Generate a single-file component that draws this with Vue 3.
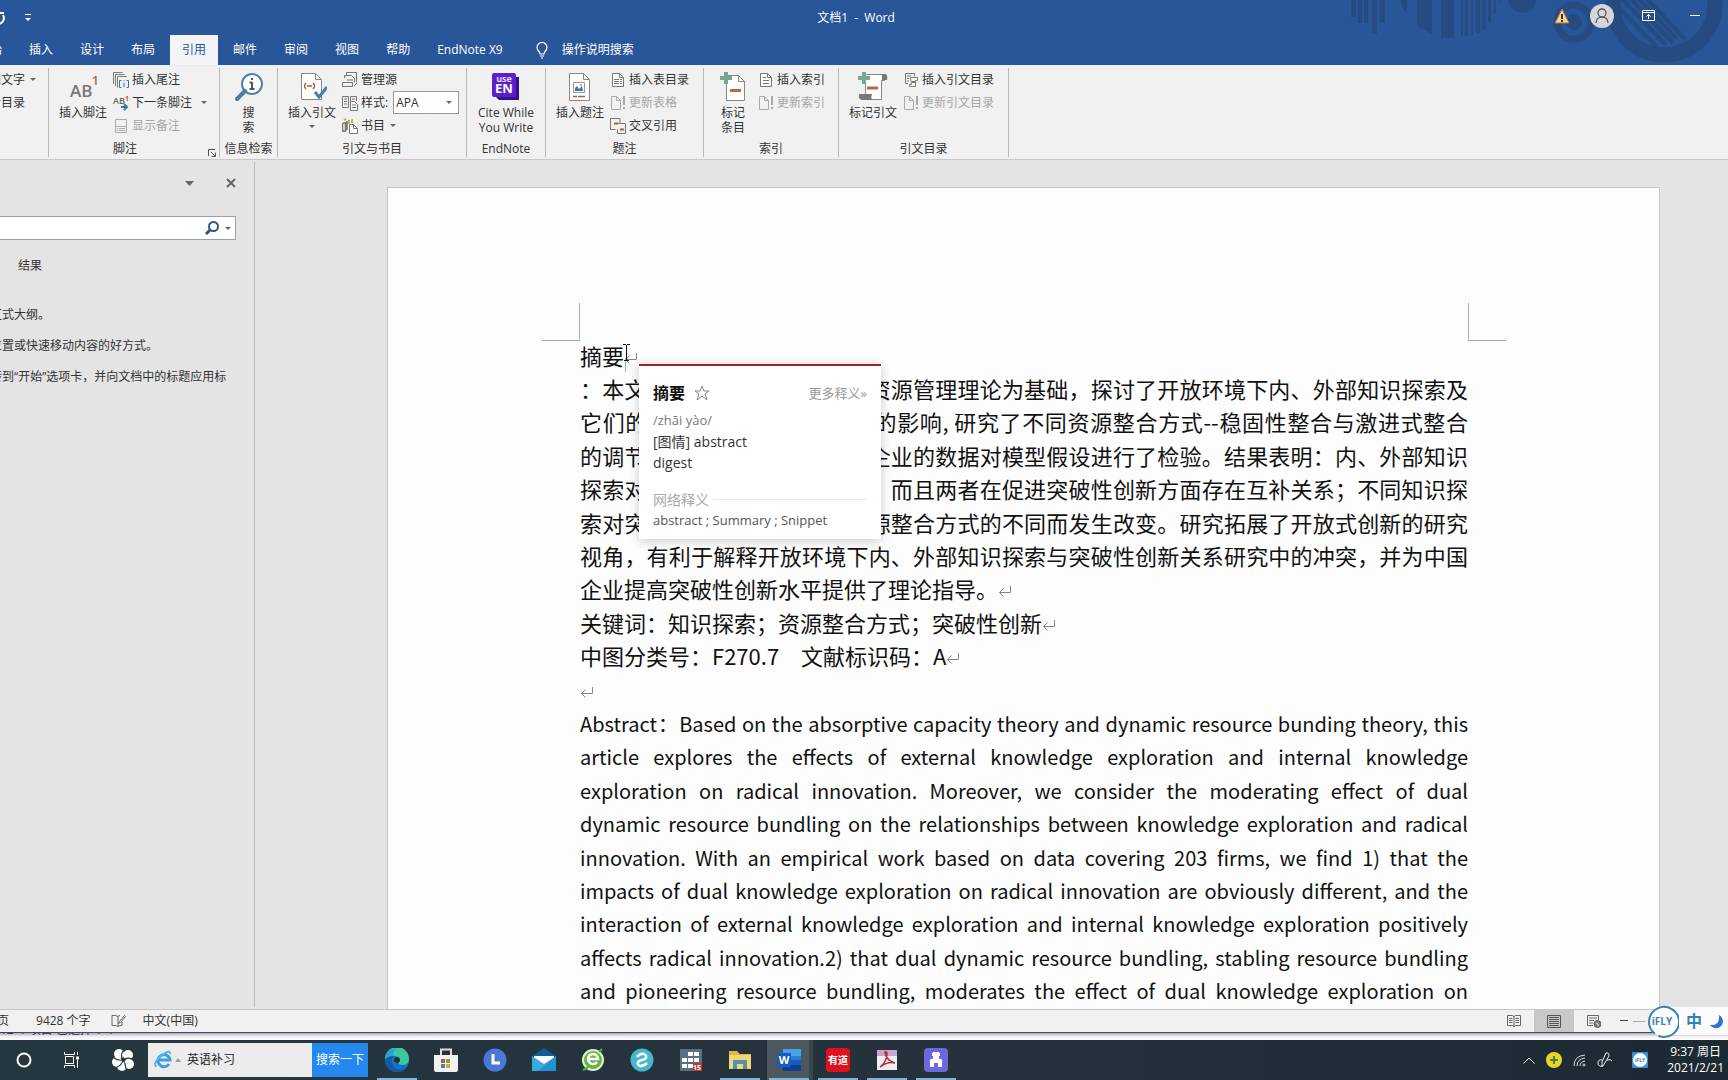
<script setup>
const tabs = ['开始', '插入', '设计', '布局', '引用', '邮件', '审阅', '视图', '帮助', 'EndNote X9']

const lines = [
  { text: '摘要', end: true },
  { text: '：本文以吸收能力理论和动态资源管理理论为基础，探讨了开放环境下内、外部知识探索及' },
  { text: '它们的交互效应对突破性创新的影响, 研究了不同资源整合方式--稳固性整合与激进式整合' },
  { text: '的调节作用，并利用我国高新企业的数据对模型假设进行了检验。结果表明：内、外部知识' },
  { text: '探索对突破性创新有促进作用，而且两者在促进突破性创新方面存在互补关系；不同知识探' },
  { text: '索对突破性创新的影响随着资源整合方式的不同而发生改变。研究拓展了开放式创新的研究' },
  { text: '视角，有利于解释开放环境下内、外部知识探索与突破性创新关系研究中的冲突，并为中国' },
  { text: '企业提高突破性创新水平提供了理论指导。', end: true },
  { text: '关键词：知识探索；资源整合方式；突破性创新', end: true },
  { text: '中图分类号：F270.7　文献标识码：A', end: true },
  { text: '', end: true },
  { latin: true, text: 'Abstract：Based on the absorptive capacity theory and dynamic resource bunding theory, this' },
  { latin: true, text: 'article explores the effects of external knowledge exploration and internal knowledge' },
  { latin: true, text: 'exploration on radical innovation. Moreover, we consider the moderating effect of dual' },
  { latin: true, text: 'dynamic resource bundling on the relationships between knowledge exploration and radical' },
  { latin: true, text: 'innovation. With an empirical work based on data covering 203 firms, we find 1) that the' },
  { latin: true, text: 'impacts of dual knowledge exploration on radical innovation are obviously different, and the' },
  { latin: true, text: 'interaction of external knowledge exploration and internal knowledge exploration positively' },
  { latin: true, text: 'affects radical innovation.2) that dual dynamic resource bundling, stabling resource bundling' },
  { latin: true, text: 'and pioneering resource bundling, moderates the effect of dual knowledge exploration on' }
]
</script>

<template>
  <div class="screen">
    <header class="head">
      <svg class="deco" width="528" height="65" viewBox="0 0 528 65" aria-hidden="true">
        <g fill="#254b80">
          <path d="M151 0h5v17h-5zM158 0h4v23h-4zM164 0h4v23h-4zM172 0h5v34h-5zM180 0h5v23h-5zM201 0h6v14l-4-5z" />
          <path d="M217 0h15v34l-15-8zM241 0h13v38h-13zM261 0h2v36h-2zM265 0h3v36h-3zM271 0h2v35h-2zM276 0h4v33h-4zM282 0h4v29h-4zM288 0h3v22h-3zM294 0h2v14h-2zM300 0h1v5h-1z" />
          <path d="M309 0h27a13.500 13 0 0 1-27 0z" />
          <circle cx="374" cy="22" r="8" />
        </g>
        <circle cx="374" cy="22" r="17" fill="none" stroke="#254b80" stroke-width="7" />
        <circle cx="464" cy="4" r="51" fill="none" stroke="#254b80" stroke-width="15" />
        <path d="M415 4l42 43M422 -1l44 46M431 -1l42 44M439 -1l38 40M447 -1l38 40" stroke="#254b80" stroke-width="4" />
      </svg>
      <div class="titlebar">
        <div class="quick">
          <button class="ic" aria-label="重做"><svg width="16" height="16" viewBox="0 0 16 16" fill="none" stroke="#fff" stroke-width="2"><path d="M8 3h6v0M9 3v5M13 5a6 6 0 0 1-6 9" /></svg></button>
          <button class="ic" aria-label="自定义快速访问工具栏"><svg width="8" height="8" viewBox="0 0 8 8"><path d="M1 0h6v1H1zM1 4h6L4 7z" fill="#fff" /></svg></button>
        </div>
        <h1>文档1&nbsp; -&nbsp; Word</h1>
        <div class="winctl">
          <svg class="warn" width="16" height="16" viewBox="0 0 16 16"><path d="M8 1l7 14H1z" fill="#fbd48d" stroke="#b3762f" /><path d="M8 6v5M8 12v2" stroke="#333" stroke-width="2" /></svg>
          <button class="ic" aria-label="帐户"><svg width="24" height="24" viewBox="0 0 24 24"><circle cx="12" cy="12" r="12" fill="#d5d5da" /><g fill="none" stroke="#555" stroke-width="1.300"><circle cx="12" cy="9" r="4" /><path d="M6 19c0-8 12-8 12 0" /></g></svg></button>
          <button class="ic rb" aria-label="功能区显示选项"><svg width="13" height="11" viewBox="0 0 13 11" fill="none" stroke="#fff"><path d="M.5.5h12v10H.5zM.5 2.500h12M6.500 9V4.500M4.500 6.500l2-2 2 2" /></svg></button>
          <button class="ic mn" aria-label="最小化"><svg width="10" height="1" viewBox="0 0 10 1"><path d="M0 0h10v1H0z" fill="#fff" /></svg></button>
        </div>
      </div>
      <nav class="tabs">
        <button v-for="t in tabs" :key="t" :class="{ on: t === '引用' }">{{ t }}</button>
        <button class="tell"><svg width="12" height="17" viewBox="0 0 12 17" fill="none" stroke="#fff" stroke-width="1.200"><path d="M4 12c0-3-3-3-3-6.500a5 5 0 0 1 10 0C11 9 8 9 8 12zM4 14h4M5 16h2" /></svg>操作说明搜索</button>
      </nav>
    </header>

    <section class="ribbon">
      <div class="group g0">
        <div class="tools"><div class="small">
          <button>添加文字<i class="caret"></i></button>
          <button>更新目录</button>
        </div></div>
        <div class="cap">&nbsp;</div>
      </div>

      <div class="group g1">
        <div class="tools">
          <button class="big"><svg width="30" height="30" viewBox="0 0 30 30"><text x="2" y="25" font-family="Open Sans, sans-serif" font-weight="600" font-size="17" fill="#777">AB</text><text x="24" y="13" font-family="Open Sans, sans-serif" font-weight="600" font-size="12" fill="#c55a3b">1</text></svg>插入脚注</button>
          <div class="small">
            <button><svg width="16" height="16" viewBox="0 0 16 16" fill="none" stroke="#777"><path d="M.5 12V.500h9M2.500 14V2.500h9M4.500 15.500v-11h9" /><path d="M8.500 8.500h-2v7h2M13.500 8.500h2v7h-2M11 11v4M11 8.500v1" stroke="#3f6f9f" /></svg>插入尾注</button>
            <button><svg width="16" height="16" viewBox="0 0 16 16"><text x="0" y="9" font-family="Open Sans, sans-serif" font-weight="600" font-size="9" fill="#666">AB</text><text x="12" y="6" font-family="Open Sans, sans-serif" font-weight="700" font-size="7" fill="#c55a3b">1</text><path d="M8 12h6M11 9l3 3-3 3" fill="none" stroke="#3c77a8" stroke-width="2" /></svg>下一条脚注<i class="caret far"></i></button>
            <button disabled><svg width="16" height="16" viewBox="0 0 16 16" fill="none" stroke="#aaa"><path d="M2.500 1.500h11v13h-11zM2.500 8.500h11M4 10.500h1M6 10.500h6M4 12.500h1M6 12.500h6" /></svg>显示备注</button>
          </div>
        </div>
        <div class="cap">脚注</div>
        <button class="launch" aria-label="脚注和尾注"><svg width="8" height="8" viewBox="0 0 8 8" fill="none" stroke="#555"><path d="M.5 7V.500H7M3 3l4 4M7.500 3.500v4h-4" /></svg></button>
      </div>

      <div class="group g2">
        <div class="tools">
          <button class="big"><svg width="30" height="30" viewBox="0 0 30 30"><circle cx="18" cy="12" r="10" fill="#fff" stroke="#4a80b0" stroke-width="2" /><path d="M3 27l8-8" stroke="#4a7aa5" stroke-width="4" stroke-linecap="round" /><path d="M18 10v7M15.500 10.500H18M15.500 17h5M18 6v2" stroke="#555" stroke-width="2" fill="none" /></svg>搜<br>索</button>
        </div>
        <div class="cap">信息检索</div>
      </div>

      <div class="group g3">
        <div class="tools">
          <button class="big"><svg width="30" height="30" viewBox="0 0 30 30" fill="none"><path d="M4.500 1.500h14l6 6v20h-20z" fill="#fff" stroke="#888" /><path d="M18.500 1.500v6h6" stroke="#888" /><path d="M9 11q-3 3 0 6M16 11q3 3 0 6M10 14h5" stroke="#b5593a" stroke-width="1.500" /><path d="M18 20l4 5 8-10" stroke="#4a7fae" stroke-width="3" /></svg>插入引文<i class="caret"></i></button>
          <div class="small">
            <button><svg width="16" height="16" viewBox="0 0 16 16" fill="none" stroke="#777"><path d="M4.500 3V.500h10v10M2.500 6V3.500h7l3 3v4M.5 10.500h10v4H.500zM5 8h6M12 14l3-3" /></svg>管理源</button>
            <div class="row"><svg width="16" height="16" viewBox="0 0 16 16" fill="none" stroke="#777"><path d="M.5 1.500h6v11h-6zM8.500 6V1.500h6V6M2 4h3M2 6.500h3M2 9h3M10 4h3" /><path d="M8.500 6.500h4l3 3v6h-7z" fill="#fff" /><path d="M10 10h4M10 12.500h4" stroke="#4a80b0" /></svg><label for="style">样式:</label>
              <select id="style"><option>APA</option></select></div>
            <button><svg width="16" height="16" viewBox="0 0 16 16" fill="none"><path d="M.5 5v9M3.500 4v10M1 5h2M1 13h2M5 3v9" stroke="#777" stroke-width="1.500" /><path d="M7 2v4M10 1v4M2 2l2-1" stroke="#d8a552" stroke-width="2" /><path d="M7.500 6.500h4l4 4v5h-8zM11.500 6.500v4h4" fill="#fff" stroke="#777" /></svg>书目<i class="caret"></i></button>
          </div>
        </div>
        <div class="cap">引文与书目</div>
      </div>

      <div class="group g4">
        <div class="tools">
          <button class="big"><svg width="30" height="30" viewBox="0 0 30 30"><path d="M5 5h23v23H8l-3-3z" fill="#37108c" /><rect x="1" y="1" width="24" height="24" rx="2" fill="#5c1fc9" /><text x="13" y="10" text-anchor="middle" font-family="Open Sans, sans-serif" font-weight="700" font-size="9" fill="#e4d6fa">use</text><text x="13" y="21" text-anchor="middle" font-family="Open Sans, sans-serif" font-weight="700" font-size="13" fill="#fff">EN</text></svg>Cite While<br>You Write</button>
        </div>
        <div class="cap">EndNote</div>
      </div>

      <div class="group g5">
        <div class="tools">
          <button class="big"><svg width="30" height="30" viewBox="0 0 30 30" fill="none"><path d="M4.500 1.500h14l6 6v21h-20z" fill="#fff" stroke="#888" /><path d="M18.500 1.500v6h6" stroke="#888" /><path d="M8.500 10.500h11v10h-11z" stroke="#999" /><path d="M10 19v-3l2-2 2 3 3-3 1 5z" fill="#3f76a8" /><circle cx="16" cy="13" r="1" fill="#d09238" /><path d="M8 24.500h4M13 24.500h7" stroke="#b5593a" stroke-width="1.500" /></svg>插入题注</button>
          <div class="small">
            <button><svg width="16" height="16" viewBox="0 0 16 16" fill="none" stroke="#777"><path d="M2.500 1.500h7l4 4v9h-11zM9.500 1.500v4h4" fill="#fff" /><path d="M4 7.500h5M10 7.500h2M4 9.500h5M10 9.500h2M4 11.500h5M10 11.500h2" /></svg>插入表目录</button>
            <button disabled><svg width="16" height="16" viewBox="0 0 16 16" fill="none" stroke="#aaa"><path d="M1.500 1.500h5l4 4v9h-9zM6.500 1.500v4h4" /><path d="M14 1v9M14 12v2" stroke-width="2" /></svg>更新表格</button>
            <button><svg width="16" height="16" viewBox="0 0 16 16" fill="none" stroke="#777"><path d="M10 5V.500H.500v11h5M7 5.500h8.500v10h-8v-4" /><path d="M4 5.500h4M10 11.500h4" stroke="#b5593a" stroke-width="2" /></svg>交叉引用</button>
          </div>
        </div>
        <div class="cap">题注</div>
      </div>

      <div class="group g6">
        <div class="tools">
          <button class="big"><svg width="30" height="30" viewBox="0 0 30 30" fill="none"><path d="M8.500 3.500h12l6 6v19h-18z" fill="#fff" stroke="#888" /><path d="M20.500 3.500v6h6" stroke="#888" /><path d="M4 5h4V1h4v4h4v4h-4v4H8V9H4z" fill="#76a797" transform="translate(-2 -1)" /><path d="M12 18.500h11" stroke="#b56a4c" stroke-width="3" /></svg>标记<br>条目</button>
          <div class="small">
            <button><svg width="16" height="16" viewBox="0 0 16 16" fill="none" stroke="#777"><path d="M2.500 1.500h7l4 4v9h-11zM9.500 1.500v4h4" fill="#fff" /><path d="M5 5.500h3M5 8.500h6M5 11.500h6" /></svg>插入索引</button>
            <button disabled><svg width="16" height="16" viewBox="0 0 16 16" fill="none" stroke="#aaa"><path d="M1.500 1.500h5l4 4v9h-9zM6.500 1.500v4h4" /><path d="M14 1v9M14 12v2" stroke-width="2" /></svg>更新索引</button>
          </div>
        </div>
        <div class="cap">索引</div>
      </div>

      <div class="group g7">
        <div class="tools">
          <button class="big"><svg width="30" height="30" viewBox="0 0 30 30" fill="none"><path d="M7.500 22V2.500h19v6h-3v19h-10" fill="#fff" stroke="#888" /><path d="M24 2h3q3 0 2 6h-5z" fill="#777" /><path d="M1 22h13q-2 6 2 6H5q-5 0-4-6z" fill="#777" /><path d="M4 5h4V1h4v4h4v4h-4v4H8V9H4z" fill="#76a797" transform="translate(-4 -1)" /><path d="M9 16h11" stroke="#b56a4c" stroke-width="3" /></svg>标记引文</button>
          <div class="small">
            <button><svg width="16" height="16" viewBox="0 0 16 16" fill="none" stroke="#777"><path d="M5 11.500H2.500V1.500h9v3M4 4h4M4 6.500h2M4 9h2" /><path d="M7.500 5.500h7v3h-2v6h-6v-2h2z" fill="#fff" /><path d="M9 10h3" stroke="#b5593a" stroke-width="2" /></svg>插入引文目录</button>
            <button disabled><svg width="16" height="16" viewBox="0 0 16 16" fill="none" stroke="#aaa"><path d="M1.500 1.500h5l4 4v9h-9zM6.500 1.500v4h4" /><path d="M14 1v9M14 12v2" stroke-width="2" /></svg>更新引文目录</button>
          </div>
        </div>
        <div class="cap">引文目录</div>
      </div>
    </section>

    <main class="work">
      <aside class="pane">
        <div class="panehead">
          <button class="ic" aria-label="窗格选项"><svg width="9" height="5" viewBox="0 0 9 5"><path d="M0 0h9L4.500 5z" fill="#666" /></svg></button>
          <button class="ic" aria-label="关闭"><svg width="10" height="10" viewBox="0 0 10 10"><path d="M1 1l8 8M9 1L1 9" stroke="#666" stroke-width="2" /></svg></button>
        </div>
        <div class="find">
          <input type="text" aria-label="在文档中搜索">
          <button class="ic" aria-label="搜索"><svg width="14" height="14" viewBox="0 0 14 14" fill="none" stroke="#2f5288"><circle cx="8.500" cy="5.500" r="4.500" stroke-width="2" /><path d="M1 13l4-4" stroke-width="3" /></svg></button>
          <i class="caret"></i>
        </div>
        <div class="subtab"><button>结果</button></div>
        <div class="tips">
          <p>若要创建文档的交互式大纲。</p>
          <p>它是跟踪您的具体位置或快速移动内容的好方式。</p>
          <p>若要开始操作，请转到“开始”选项卡，并向文档中的标题应用标题样式。</p>
        </div>
      </aside>

      <div class="canvas">
        <article class="page">
          <span class="crop left"></span><span class="crop right"></span>
          <div class="lines">
            <p v-for="(l, i) in lines" :key="i" :class="{ end: l.end, latin: l.latin }">{{ l.text }}<svg v-if="l.end" width="13" height="13" viewBox="0 0 13 13" fill="none" stroke="#888"><path d="M12.500 1v6.500H1.500M5.500 3.500l-4 4 4 4" /></svg></p>
          </div>
          <svg class="ibeam" width="9" height="28" viewBox="0 0 9 28" fill="none"><path d="M3.500 14v14" stroke="#aaa" /><path d="M1 .5h3M5 .5h3M4.500 1v15M2 16.500h5" stroke="#111" /></svg>
          <div class="pop">
            <div class="poptop"><b>摘要</b><svg width="16" height="16" viewBox="0 0 16 16" fill="none" stroke="#888"><path d="M8 1l2 5h5l-4 3 2 6-5-4-5 4 2-6-4-3h5z" /></svg><a href="#">更多释义»</a></div>
            <p class="py">/zhāi yào/</p>
            <p>[图情] abstract</p>
            <p>digest</p>
            <div class="net">网络释义</div>
            <p class="web">abstract ; Summary ; Snippet</p>
          </div>
        </article>
      </div>
    </main>

    <footer class="status">
      <span>页</span><span class="words">9428 个字</span>
      <svg class="proof" width="15" height="14" viewBox="0 0 15 14" fill="none" stroke="#666"><path d="M9 1.500q-1 0-2 1-2-1.500-6-1v10q4-.5 6 1 1-1 4-1V8M7 2.500v10M13.500 1.500l-5 6-1 2 2-1 5-6z" /></svg>
      <span>中文(中国)</span>
      <div class="views">
        <button aria-label="阅读视图"><svg width="14" height="12" viewBox="0 0 14 12" fill="none" stroke="#666"><path d="M.5.500h5l1.500 1 1.500-1h5v10h-5l-1.500 1-1.500-1h-5zM7 1v11M2 3.500h3.500M2 5.500h3.500M2 7.500h3.500M8.500 3.500H12M8.500 5.500H12M8.500 7.500H12" /></svg></button>
        <button class="on" aria-label="页面视图"><svg width="14" height="13" viewBox="0 0 14 13" fill="none" stroke="#555"><path d="M.5.500h13v12H.500zM2 2.500h10M2 4.500h10M2 6.500h10M2 8.500h10M2 10.500h10" /></svg></button>
        <button aria-label="Web 版式视图"><svg width="14" height="13" viewBox="0 0 14 13" fill="none" stroke="#666"><path d="M6 10.500H.500V.500h11V5M2 3h8M2 5.500h5M2 8h4" /><circle cx="10.500" cy="9" r="3.500" fill="#777" /><path d="M9 8l2 1v2" stroke="#eee" /></svg></button>
      </div>
      <button class="minus" aria-label="缩小"><svg width="8" height="2" viewBox="0 0 8 2"><path d="M0 0h8v1H0z" fill="#444" /></svg></button>
      <span class="track"></span>
      <div class="ime">
        <svg width="34" height="34" viewBox="0 0 34 34"><path d="M9 29A15 15 0 1 1 14 32" fill="#fff" stroke="#3783b8" stroke-width="2" stroke-linecap="round" /><text x="17" y="21" text-anchor="middle" font-family="Open Sans, sans-serif" font-weight="700" font-size="10" fill="#3783b8">iFLY</text></svg>
        <b>中</b>
        <svg width="15" height="15" viewBox="0 0 15 15"><path d="M10 1A7 7 0 1 1 1 11Q11 12 10 1z" fill="#2e74cf" /></svg>
      </div>
    </footer>
    <div class="behind"><span>12 个项目 已选择 1 个</span></div>

    <div class="taskbar">
      <div class="sys">
        <button aria-label="Cortana"><svg width="16" height="16" viewBox="0 0 16 16"><circle cx="8" cy="8" r="6.500" fill="none" stroke="#fff" stroke-width="2" /></svg></button>
        <button aria-label="任务视图"><svg width="16" height="16" viewBox="0 0 16 16" fill="none" stroke="#fff"><path d="M.5 0v2.500h10V0M.5 16v-2.500h10V16M1.500 4.500h8v7h-8zM13.500 0v3M13.500 8v8" /><path d="M12 6h3" stroke-width="3" /></svg></button>
        <button aria-label="启动器"><svg width="22" height="22" viewBox="0 0 22 22"><g fill="#fff"><circle cx="7" cy="5" r="5" /><circle cx="16" cy="6" r="5" /><circle cx="5" cy="13" r="5" /><circle cx="17" cy="15" r="5" /><circle cx="10" cy="17" r="5" /></g><path d="M11 11q-3-4 0-9M11 11q4-3 9-1M11 11q3 4 3 9M11 11q-1 5-6 7M11 11q-5 1-9-2" fill="none" stroke="#26363e" stroke-width="1.200" /></svg></button>
      </div>
      <form class="search" @submit.prevent>
        <svg width="18" height="20" viewBox="0 0 18 20" fill="none"><path d="M15 14a6 6 0 1 1 1-4H5" stroke="#3ea0e0" stroke-width="3" /><path d="M2 17Q-1 12 8 5q9-6 8-1" stroke="#5ab4ea" stroke-width="2" /></svg>
        <svg width="6" height="4" viewBox="0 0 6 4"><path d="M0 4h6L3 0z" fill="#999" /></svg>
        <input type="text" value="英语补习" aria-label="搜索内容">
        <button>搜索一下</button>
      </form>
      <div class="apps">
        <button class="run" aria-label="Edge"><svg width="24" height="24" viewBox="0 0 24 24"><circle cx="12" cy="12" r="12" fill="#1673c4" /><path d="M0 11A12 12 0 0 1 24 11q0 6-7 6-4 0-3-3 2-6-5-6-6 0-9 3z" fill="#3cc79c" /><path d="M0 11Q1 1 11 0q-3 4-2 8-6 0-9 3z" fill="#2aa3d8" /><path d="M9 8q-5 5 0 11 5 5 12 1-4 5-10 4Q1 22 0 12q3-4 9-4z" fill="#1558a8" /><circle cx="12" cy="12" r="3" fill="#22323a" /></svg></button>
        <button aria-label="商店"><svg width="24" height="24" viewBox="0 0 24 24"><path d="M7 8V1.500h10V8" fill="none" stroke="#ddd" stroke-width="2" /><path d="M0 7h24v15q0 2-2 2H2q-2 0-2-2z" fill="#f2f2f2" /><path d="M7 11h4v4H7z" fill="#c8553a" /><path d="M12 11h4v4h-4z" fill="#7ca540" /><path d="M7 16h4v4H7z" fill="#3c87b8" /><path d="M12 16h4v4h-4z" fill="#d9a63a" /></svg></button>
        <button aria-label="联想"><svg width="24" height="24" viewBox="0 0 24 24"><circle cx="12" cy="12" r="11.500" fill="#4a78d8" /><path d="M10 6v9h7" fill="none" stroke="#fff" stroke-width="3" /></svg></button>
        <button aria-label="邮件"><svg width="24" height="24" viewBox="0 0 24 24"><path d="M0 8l12-8 12 8v15H0z" fill="#135e9c" /><path d="M2 8h20v8H2z" fill="#fff" /><path d="M0 8l12 8 12-8v15H0z" fill="#3aa9e0" /><path d="M24 8L6 23h18z" fill="#2492d0" /></svg></button>
        <button aria-label="浏览器"><svg width="24" height="24" viewBox="0 0 24 24" fill="none"><circle cx="12" cy="12" r="10" fill="#6ab43e" stroke="#dff2cf" stroke-width="2" /><path d="M16 14a5 5 0 1 1 1-3H8" stroke="#fff" stroke-width="2.500" /><path d="M2 22q3-1 5-3M18 4l3-3" stroke="#5cae35" stroke-width="2" /></svg></button>
        <button aria-label="搜狗"><svg width="24" height="24" viewBox="0 0 24 24"><circle cx="12" cy="12" r="11.500" fill="#45b9cb" /><path d="M7 9q3-4 7-3 4 2 1 5l-6 2q-3 3 1 5 4 0 7-3" fill="none" stroke="#fff" stroke-width="2.500" /></svg></button>
        <button aria-label="日历"><svg width="24" height="24" viewBox="0 0 24 24"><path d="M1 1h22v22H1z" fill="#56707f" /><path d="M9 4h5v4H9zM15 4h5v4h-5zM3 10h5v4H3zM9 10h5v4H9zM15 10h5v4h-5zM3 16h5v4H3zM9 16h5v4H9z" fill="#fff" /><path d="M14 15h9v8h-9z" fill="#c2363a" /><text x="18" y="22" text-anchor="middle" font-family="Open Sans, sans-serif" font-weight="700" font-size="7" fill="#fff">15</text></svg></button>
        <button class="run" aria-label="文件资源管理器"><svg width="24" height="24" viewBox="0 0 24 24"><path d="M1 3h8l3 3h11v15H1z" fill="#e3b548" /><path d="M1 7h22v14H1z" fill="#f6d576" /><path d="M5 21v-9h14v9h-4v-5H9v5z" fill="#4d94b3" /></svg></button>
        <button class="run active" aria-label="Word"><svg width="24" height="24" viewBox="0 0 24 24"><path d="M6 1h18v8H6z" fill="#47a2e8" /><path d="M6 8h18v5H6z" fill="#2a7ed0" /><path d="M6 12h18v6H6z" fill="#185abd" /><path d="M6 17h18v6H6z" fill="#103f91" /><path d="M0 5h14v14H0z" fill="#185abd" /><text x="7" y="16" text-anchor="middle" font-family="Open Sans, sans-serif" font-weight="700" font-size="11" fill="#fff">W</text></svg></button>
        <button class="run" aria-label="有道"><span class="yd">有道</span></button>
        <button class="run" aria-label="PDF"><svg width="22" height="22" viewBox="0 0 22 22" fill="none"><path d="M1 1h20v20H1z" fill="#f1edf5" /><path d="M1 1h20v6H1z" fill="#c7a6cf" /><path d="M4 18Q11 13 11 4q-2-3-2 0 2 8 10 10-7-2-15 4z" stroke="#b52a3a" stroke-width="1.500" /></svg></button>
        <button class="run" aria-label="助手"><svg width="24" height="24" viewBox="0 0 24 24"><rect width="24" height="24" rx="4" fill="#6b68de" /><path d="M9 4h6v1h1v3h-1v3h2q2 1 1 4v4h-4v-4h-4v4H6v-4q-1-3 1-4h2V8H8V5h1z" fill="#fff" /></svg></button>
      </div>
      <div class="tray">
        <svg width="12" height="7" viewBox="0 0 12 7" fill="none" stroke="#fff"><path d="M.5 6.500L6 1l5.500 5.500" /></svg>
        <svg width="16" height="16" viewBox="0 0 16 16"><circle cx="8" cy="8" r="8" fill="#efd42e" /><path d="M8 4v8M4 8h8" stroke="#3c8a2c" stroke-width="2" /></svg>
        <svg width="13" height="13" viewBox="0 0 13 13" fill="none" stroke="#ddd"><path d="M1 12Q1 2 12 1M4 12q0-7 8-8M7 12q0-4 5-5" /><circle cx="11" cy="11" r="1" /></svg>
        <svg width="16" height="16" viewBox="0 0 16 16" fill="none" stroke="#eee"><path d="M5 8q-4-1-4 3t5 3l6-10q0-4-3-3L5 10v5M10 8q4-1 5 1" /></svg>
        <svg class="fly" width="16" height="16" viewBox="0 0 16 16"><path d="M0 0h16v16H0z" fill="#3d8cd0" /><circle cx="8" cy="8" r="7" fill="#fff" /><text x="8" y="10" text-anchor="middle" font-family="Open Sans, sans-serif" font-weight="700" font-size="5" fill="#3783b8">iFLY</text></svg>
        <div class="clock"><span>9:37 周日</span><span>2021/2/21</span></div>
      </div>
    </div>
  </div>
</template>

<style>
body { margin: 0; }
</style>

<style scoped>
.screen {
  display: flex; flex-direction: column; height: 100vh; overflow: hidden;
  font: 12px/16px "Open Sans", "Noto Sans CJK SC", sans-serif; color: #333; background: #e4e4e4;
}
svg { display: block; flex: none; }
p, h1 { margin: 0; font-weight: 400; }
button { border: 0; padding: 0; margin: 0; background: none; font: inherit; color: inherit; white-space: nowrap; }
input { border: 0; padding: 0; background: none; font: inherit; color: inherit; min-width: 0; outline: 0; }
.caret { flex: none; border: 3px solid transparent; border-top-color: #666; border-bottom: 0; }

.head { position: relative; flex: none; background: #295698; color: #fff; }
.deco { position: absolute; top: 0; right: 0; }
.titlebar { position: relative; display: grid; grid-template-columns: 1fr auto 1fr; align-items: center; height: 35px; padding-right: 16px; }
h1 { font-size: 12px; }
.quick { display: flex; align-items: center; gap: 18px; margin-left: -10px; }
.winctl { display: flex; align-items: center; justify-content: flex-end; margin-right: 12px; padding-bottom: 4px; }
.winctl .warn { margin-right: 20px; }
.winctl .rb { margin-left: 28px; }
.winctl .mn { margin-left: 35px; }
.tabs { position: relative; display: flex; gap: 3px; height: 30px; margin-left: -34px; }
.tabs button { padding: 0 12px; }
.tabs .on { background: #f3f4f6; color: #295698; }
.tabs .tell { display: flex; align-items: center; gap: 14px; margin-left: 6px; }

.ribbon { display: flex; flex: none; height: 95px; background: #f1f1f1; border-top: 1px solid #e6eef8; border-bottom: 1px solid #c8c8c8; box-sizing: border-box; }
.group { position: relative; flex: none; display: flex; flex-direction: column; justify-content: space-between; box-sizing: border-box; margin: 2px 0; border-right: 1px solid #b8b8b8; }
.g0 { width: 72px; margin-left: -23px; }
.g1 { width: 171px; }
.g2 { width: 58px; }
.g3 { width: 189px; }
.g4 { width: 79px; }
.g5 { width: 158px; }
.g6 { width: 135px; }
.g7 { width: 170px; }
.tools { display: flex; gap: 6px; padding-left: 10px; }
.g0 .tools { padding-left: 0; }
.g2 .tools, .g4 .tools { padding: 0; justify-content: center; }
.big { display: flex; flex-direction: column; align-items: center; min-width: 38px; padding-top: 4px; line-height: 15px; }
.big svg { margin-bottom: 3px; }
.big .caret { margin-top: 5px; }
.small { display: flex; flex-direction: column; align-items: flex-start; }
.small button, .row { display: flex; align-items: center; gap: 3px; height: 23px; }
.small button .caret { margin-left: 2px; }
.small button .far { margin-left: 6px; }
.small button:disabled { color: #a6a6a6; }
.row select { width: 66px; height: 23px; margin-left: 2px; padding: 0 2px; box-sizing: border-box; border: 1px solid #999; border-radius: 0; font: inherit; color: #333; appearance: none; background: #fff; }
.row { position: relative; }
.row::after { content: ""; position: absolute; right: 7px; top: 10px; border: 3px solid transparent; border-top-color: #666; border-bottom: 0; pointer-events: none; }
.cap { text-align: center; line-height: 16px; }
.g1 .cap { padding-right: 18px; }
.launch { position: absolute; right: 3px; bottom: 0; }

.work { display: flex; flex: 1; min-height: 0; overflow: hidden; }
.pane { flex: none; width: 254px; margin: 2px 0; border-right: 1px solid #bbb; overflow: hidden; }
.panehead { display: flex; align-items: center; justify-content: flex-end; gap: 32px; height: 42px; padding-right: 18px; }
.find { display: flex; align-items: center; height: 22px; margin: 12px 18px 0 -2px; padding-right: 4px; background: #fff; border: 1px solid #a0a0a0; }
.find input { flex: 1; }
.find .caret { margin-left: 6px; }
.subtab { margin: 18px 0 33px 18px; }
.tips { display: flex; flex-direction: column; gap: 15px; margin: 0 18px 0 -106px; }

.canvas { flex: 1; min-width: 0; display: flex; padding: 27px 68px 0 132px; }
.page { position: relative; flex: 1; min-width: 0; box-sizing: border-box; padding: 151px 191px 0 192px; background: #fdfdfd; border: 1px solid #c6c6c6; border-bottom: 0; }
.lines { display: grid; grid-auto-rows: 33px 33px 34px 33px 34px; font: 22px/32px "Noto Sans CJK SC", sans-serif; font-weight: 300; color: #111; }
.lines p { min-width: 0; white-space: nowrap; text-align: justify; text-align-last: justify; }
.lines p.end { text-align-last: left; }
.lines p.latin { font-size: 20px; line-height: 36px; }
.lines svg { display: inline-block; }
.crop { position: absolute; top: 115px; width: 37px; height: 37px; border: 0 solid #aaa; border-bottom-width: 1px; }
.crop.left { left: 154px; border-right-width: 1px; }
.crop.right { right: 153px; border-left-width: 1px; }
.ibeam { position: absolute; left: 234px; top: 156px; }
.pop { position: absolute; left: 251px; top: 176px; width: 242px; height: 175px; box-sizing: border-box; padding: 16px 14px 0; background: #fff; border-top: 2px solid #a3242a; box-shadow: 0 2px 10px #0003; font-size: 14px; line-height: 21px; }
.poptop { display: flex; align-items: center; gap: 9px; height: 22px; margin-bottom: 6px; color: #111; }
.poptop b { font-size: 16px; }
.poptop a { margin-left: auto; color: #999; font-size: 13px; text-decoration: none; }
.pop .py { font-size: 13px; color: #777; }
.net { display: flex; align-items: center; gap: 4px; margin-top: 16px; color: #aaa; }
.net::after { content: ""; flex: 1; border-top: 1px solid #e6e6e6; }
.pop .web { font-size: 13px; color: #555; }

.status { display: flex; flex: none; align-items: center; height: 22px; background: #f1f1f1; border-top: 1px solid #c6c6c6; border-bottom: 1px solid #3e4a66; }
.status > span:first-child { margin-left: -3px; }
.words { margin-left: 27px; }
.proof { margin: 0 17px 0 20px; }
.views { display: flex; align-self: stretch; margin-left: auto; }
.views button { display: flex; align-items: center; justify-content: center; width: 40px; }
.views .on { background: #c8c8c8; }
.minus { margin: 0 5px 0 6px; }
.track { width: 12px; border-top: 1px solid #aaa; }
.ime { display: flex; align-items: center; gap: 7px; height: 28px; padding-right: 4px; background: linear-gradient(90deg, transparent 17px, #fcfcfc 17px); position: relative; }
.ime b { font-size: 16px; color: #2f7fc0; }
.ime svg:first-child { margin: -3px 0; }
.behind { flex: none; height: 7px; overflow: hidden; background: linear-gradient(#b0a9b5, #f3eff3 50%, #fff); color: #335; }
.behind span { display: block; margin-top: -11px; line-height: 16px; }

.taskbar { display: flex; flex: none; align-items: center; height: 40px; background: linear-gradient(90deg, #24373f, #25313a 60%, #1c2a33); color: #fff; }
.sys { display: flex; width: 148px; box-sizing: border-box; padding-left: 16px; gap: 32px; align-items: center; }
.search { display: flex; align-items: center; flex: none; width: 220px; height: 34px; background: #ececec; box-sizing: border-box; padding-left: 6px; gap: 3px; color: #222; }
.search input { flex: 1; margin-left: 3px; }
.search button { align-self: stretch; width: 56px; background: #2488ef; color: #fff; }
.apps { display: flex; align-self: stretch; gap: 9px; margin-left: 9px; }
.apps button { display: flex; align-items: center; justify-content: center; width: 40px; border-top: 2px solid transparent; border-bottom: 2px solid transparent; }
.apps .run { border-bottom-color: #84b3d6; }
.apps .active { background: #4c585e; border-top-color: #4c585e; box-shadow: 4px 0 #3a464d, -2px 0 #4c585e; }
.yd { width: 24px; height: 24px; border-radius: 4px; background: #e0101f; font-size: 10px; font-weight: 700; line-height: 24px; }
.tray { display: flex; align-items: center; gap: 11px; margin-left: auto; padding-right: 4px; }
.fly { margin-left: 8px; }
.clock { display: flex; flex-direction: column; align-items: center; margin-left: 8px; }
</style>
